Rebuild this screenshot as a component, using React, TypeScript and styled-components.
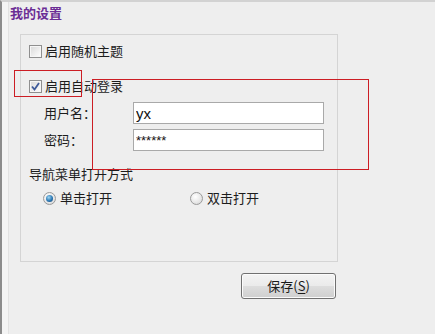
import React, { useState } from "react";
import styled, { createGlobalStyle } from "styled-components";

const GlobalStyle = createGlobalStyle`
  body {
    margin: 0;
    background: #eeeeee;
    font-family: "Noto Sans CJK SC", "Liberation Sans", sans-serif;
  }
`;

const Page = styled.div`
  position: relative;
  width: 435px;
  height: 334px;
  box-sizing: border-box;
  background: #eeeeee;
  border-top: 2px solid #d2d2d2;
  border-left: 2px solid #8c8c8c;
  box-shadow: inset 6px 0 0 #f4f4f4, inset 7px 0 0 #e2e2e2;
  display: flex;
  flex-direction: column;
  color: #1c1c1c;
  font-size: 13px;
`;

const Title = styled.div`
  margin: 3px 0 0 8px;
  height: 16px;
  line-height: 16px;
  font-size: 13px;
  font-weight: bold;
  color: #6b2d95;
`;

const Group = styled.div`
  margin: 13px 0 0 18px;
  width: 318px;
  height: 228px;
  box-sizing: border-box;
  border: 1px solid #d4d4d4;
  display: flex;
  flex-direction: column;
  padding-left: 8px;
`;

const Row = styled.label<{ $top: number; $indent?: number }>`
  display: flex;
  align-items: center;
  height: 16px;
  margin-top: ${(p) => p.$top}px;
  margin-left: ${(p) => p.$indent || 0}px;
  gap: 3px;
  line-height: 16px;
  white-space: nowrap;
`;

const Box = styled.span`
  width: 11px;
  height: 11px;
  border: 1px solid #8f8f8f;
  background: linear-gradient(135deg, #d8d8d8 0%, #f3f3f3 70%, #ffffff 100%);
  box-shadow: inset 0 0 0 1px #f6f6f6;
  display: flex;
  align-items: center;
  justify-content: center;
`;

const FieldRow = styled.div<{ $top: number }>`
  display: flex;
  align-items: center;
  margin-top: ${(p) => p.$top}px;
  margin-left: 15px;
  height: 22px;
`;

const FieldLabel = styled.span`
  width: 89px;
  line-height: 16px;
`;

const TextBox = styled.input<{ $small?: boolean }>`
  width: 191px;
  height: 22px;
  box-sizing: border-box;
  border: 1px solid #a9a9a9;
  background: #ffffff;
  padding: 0 2px;
  font-family: "Liberation Sans", sans-serif;
  font-size: ${(p) => (p.$small ? 13 : 15)}px;
  color: #111;
  outline: none;
`;

const RadioGroup = styled.div`
  display: flex;
  margin-top: 8px;
  margin-left: 14px;
`;

const RadioOption = styled.label<{ $width?: number }>`
  display: flex;
  align-items: center;
  gap: 4px;
  height: 16px;
  line-height: 16px;
  width: ${(p) => (p.$width ? `${p.$width}px` : "auto")};
`;

const Circle = styled.span<{ $on: boolean }>`
  width: 11px;
  height: 11px;
  border-radius: 50%;
  border: 1px solid #9a9a9a;
  background: radial-gradient(circle at 40% 35%, #ffffff 0%, #e6e6e6 60%, #cfcfcf 100%);
  display: flex;
  align-items: center;
  justify-content: center;
  &::after {
    content: "";
    display: ${(p) => (p.$on ? "block" : "none")};
    width: 7px;
    height: 7px;
    border-radius: 50%;
    background: radial-gradient(circle at 40% 35%, #9fd6f2 0%, #2b78b4 55%, #173f6a 100%);
  }
`;

const SaveButton = styled.button`
  margin: 11px 0 0 239px;
  width: 95px;
  height: 26px;
  box-sizing: border-box;
  border: 1px solid #707070;
  border-radius: 3px;
  background: linear-gradient(#f3f3f3 0%, #ebebeb 48%, #dddddd 52%, #cfcfcf 100%);
  box-shadow: inset 0 0 0 1px #fbfbfb;
  font-family: "Noto Sans CJK SC", sans-serif;
  font-size: 13px;
  color: #1a1a1a;
  padding: 0;
  line-height: 16px;
  u {
    text-decoration-thickness: 1px;
    text-underline-offset: 2px;
  }
`;

const Mark = styled.div<{ $l: number; $t: number; $w: number; $h: number }>`
  position: absolute;
  left: ${(p) => p.$l - 2}px;
  top: ${(p) => p.$t - 2}px;
  width: ${(p) => p.$w}px;
  height: ${(p) => p.$h}px;
  box-sizing: border-box;
  border: 1px solid #cc1d24;
  pointer-events: none;
`;

function Check({ on }: { on: boolean }) {
  return (
    <Box>
      {on && (
        <svg width="9" height="9" viewBox="0 0 9 9">
          <path d="M1 4.5 L3.5 7.5 L8 1" fill="none" stroke="#3e5a9a" strokeWidth="1.8" />
        </svg>
      )}
    </Box>
  );
}

export default function App() {
  const [mode, setMode] = useState("single");

  return (
    <Page>
      <GlobalStyle />
      <Title>我的设置</Title>
      <Group>
        <Row $top={8}>
          <Check on={false} />
          启用随机主题
        </Row>
        <Row $top={19}>
          <Check on={true} />
          启用自动登录
        </Row>
        <FieldRow $top={8}>
          <FieldLabel>用户名：</FieldLabel>
          <TextBox defaultValue="yx" />
        </FieldRow>
        <FieldRow $top={5}>
          <FieldLabel>密码：</FieldLabel>
          <TextBox $small defaultValue="******" />
        </FieldRow>
        <Row $top={15}>导航菜单打开方式</Row>
        <RadioGroup>
          <RadioOption $width={147} onClick={() => setMode("single")}>
            <Circle $on={mode === "single"} />
            单击打开
          </RadioOption>
          <RadioOption onClick={() => setMode("double")}>
            <Circle $on={mode === "double"} />
            双击打开
          </RadioOption>
        </RadioGroup>
      </Group>
      <SaveButton>
        保存(<u>S</u>)
      </SaveButton>
      <Mark $l={14} $t={70} $w={68} $h={27} />
      <Mark $l={92} $t={79} $w={277} $h={91} />
    </Page>
  );
}
